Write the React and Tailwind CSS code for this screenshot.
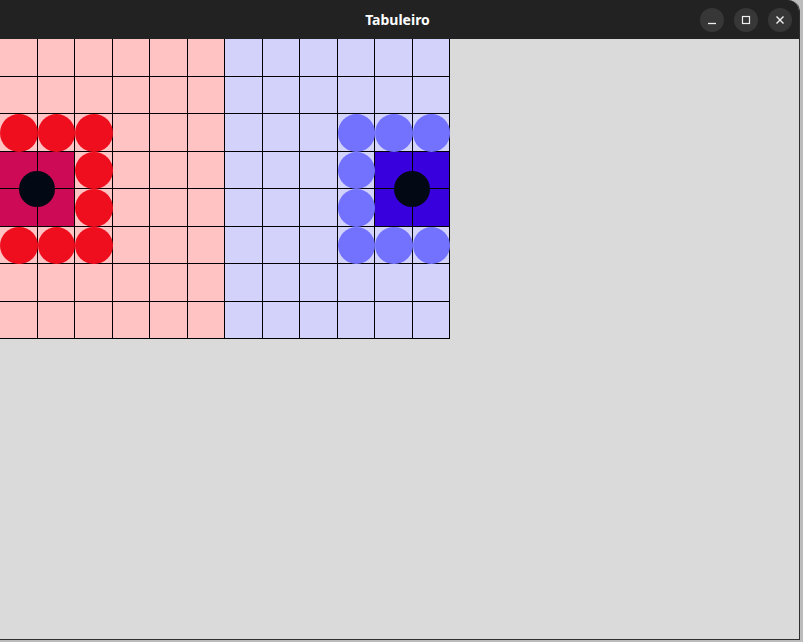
import React from 'react';

// Tabuleiro: 12 colunas x 8 linhas, metade vermelha, metade azul
const COLS = 12;
const ROWS = 8;

const redPieces = ['2-0', '2-1', '2-2', '3-2', '4-2', '5-0', '5-1', '5-2'];
const bluePieces = ['2-9', '2-10', '2-11', '3-9', '4-9', '5-9', '5-10', '5-11'];
const redBase = ['3-0', '3-1', '4-0', '4-1'];
const blueBase = ['3-10', '3-11', '4-10', '4-11'];

const Cell = ({ r, c }) => {
    const key = `${r}-${c}`;
    let bg = c < 6 ? 'bg-[#ffc3c3]' : 'bg-[#d2d2fa]';
    if (redBase.includes(key)) bg = 'bg-[#cd0a55]';
    if (blueBase.includes(key)) bg = 'bg-[#3900de]';
    const isRed = redPieces.includes(key);
    const isBlue = bluePieces.includes(key);

    return (
        <div className={`relative border-r border-b border-black ${bg}`}>
            {isRed && <div className="absolute top-0 left-0 w-[37.5px] h-[37.5px] rounded-full bg-[#ef0e1e]" />}
            {isBlue && <div className="absolute top-0 left-0 w-[37.5px] h-[37.5px] rounded-full bg-[#7272ff]" />}
        </div>
    );
};

const Board = () => {
    const cells = [];
    for (let r = 0; r < ROWS; r++) {
        for (let c = 0; c < COLS; c++) {
            cells.push(<Cell key={`${r}-${c}`} r={r} c={c} />);
        }
    }
    return (
        <div className="relative w-[450px] h-[300px] grid grid-cols-[repeat(12,37.5px)] grid-rows-[repeat(8,37.5px)]">
            {cells}
            {/* peças centrais das bases */}
            <div className="absolute left-[19px] top-[132px] w-[36px] h-[36px] rounded-full bg-[#020914]" />
            <div className="absolute left-[394px] top-[132px] w-[36px] h-[36px] rounded-full bg-[#020914]" />
        </div>
    );
};

const TitleButton = ({ children }) => (
    <div className="w-[24px] h-[24px] rounded-full bg-[#373737] flex items-center justify-center">
        {children}
    </div>
);

const App = () => {
    return (
        <div className="w-[803px] h-[642px] bg-[#bcbcbc] overflow-hidden" style={{ fontFamily: '"Noto Sans", "DejaVu Sans", sans-serif' }}>
            <div className="w-[800px] h-[640px] flex flex-col bg-[#dadada] border-r border-b border-[#2e2e2e] rounded-tr-[12px] overflow-hidden">
                <div className="h-[39px] shrink-0 bg-[#222222] relative flex items-center justify-center">
                    <span className="text-white font-bold text-[14px] ml-[-4px]">Tabuleiro</span>
                    <div className="absolute right-[7px] top-[8px] flex gap-[10px]">
                        <TitleButton>
                            <svg width="10" height="10" viewBox="0 0 10 10"><path d="M1 8.5h8" stroke="#f0f0f0" strokeWidth="1.3" /></svg>
                        </TitleButton>
                        <TitleButton>
                            <svg width="10" height="10" viewBox="0 0 10 10"><rect x="1.5" y="1.5" width="7" height="7" fill="none" stroke="#f0f0f0" strokeWidth="1.2" /></svg>
                        </TitleButton>
                        <TitleButton>
                            <svg width="10" height="10" viewBox="0 0 10 10"><path d="M1.5 1.5l7 7M8.5 1.5l-7 7" stroke="#f0f0f0" strokeWidth="1.4" /></svg>
                        </TitleButton>
                    </div>
                </div>
                <div className="flex-1">
                    <Board />
                </div>
            </div>
        </div>
    );
};

export default App;
